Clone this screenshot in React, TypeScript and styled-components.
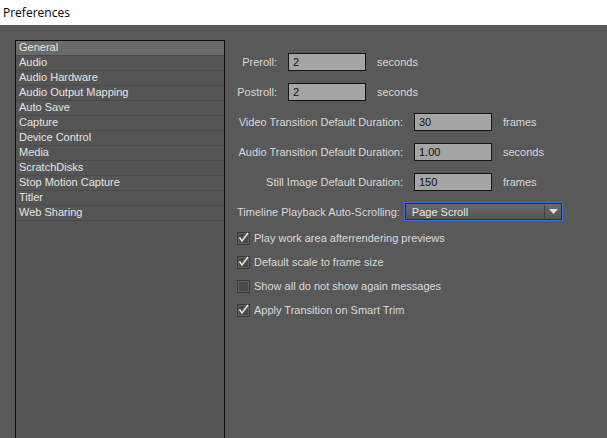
import styled, { createGlobalStyle } from 'styled-components';

const GlobalStyle = createGlobalStyle`
  html, body {
    margin: 0;
    padding: 0;
    background: #595959;
    overflow: hidden;
  }
  * {
    box-sizing: border-box;
  }
`;

const categories = [
  'General',
  'Audio',
  'Audio Hardware',
  'Audio Output Mapping',
  'Auto Save',
  'Capture',
  'Device Control',
  'Media',
  'ScratchDisks',
  'Stop Motion Capture',
  'Titler',
  'Web Sharing',
];

const timeFields = [
  { label: 'Preroll:', value: '2', unit: 'seconds' },
  { label: 'Postroll:', value: '2', unit: 'seconds' },
];

const durationFields = [
  { label: 'Video Transition Default Duration:', value: '30', unit: 'frames' },
  { label: 'Audio Transition Default Duration:', value: '1.00', unit: 'seconds' },
  { label: 'Still Image Default Duration:', value: '150', unit: 'frames' },
];

const checks = [
  { label: 'Play work area afterrendering previews', checked: true },
  { label: 'Default scale to frame size', checked: true },
  { label: 'Show all do not show again messages', checked: false },
  { label: 'Apply Transition on Smart Trim', checked: true },
];

const App = () => {
  return (
    <Window>
      <GlobalStyle />
      <TitleBar>Preferences</TitleBar>
      <Body>
        <CategoryList>
          {categories.map((name, i) => (
            <CategoryItem key={name} $active={i === 0}>
              {name}
            </CategoryItem>
          ))}
        </CategoryList>
        <Panel>
          <FieldGroup>
            {timeFields.map((f) => (
              <FieldRow key={f.label}>
                <FieldLabel $width={40}>{f.label}</FieldLabel>
                <TextBox>{f.value}</TextBox>
                <Unit>{f.unit}</Unit>
              </FieldRow>
            ))}
            {durationFields.map((f) => (
              <FieldRow key={f.label}>
                <FieldLabel $width={166}>{f.label}</FieldLabel>
                <TextBox>{f.value}</TextBox>
                <Unit>{f.unit}</Unit>
              </FieldRow>
            ))}
          </FieldGroup>
          <SelectRow>
            <SelectLabel>Timeline Playback Auto-Scrolling:</SelectLabel>
            <Select>
              <SelectValue>Page Scroll</SelectValue>
              <SelectArrow>
                <svg width="9" height="5" viewBox="0 0 9 5">
                  <path d="M0 0 H9 L4.5 5 Z" fill="#e0e0e0" />
                </svg>
              </SelectArrow>
            </Select>
          </SelectRow>
          <CheckList>
            {checks.map((c) => (
              <CheckRow key={c.label}>
                <CheckBox>
                  {c.checked && (
                    <svg width="13" height="13" viewBox="0 0 13 13">
                      <path
                        d="M2.5 6.5 L5 10 L11 2"
                        fill="none"
                        stroke="#e6e6e6"
                        strokeWidth="1.6"
                      />
                    </svg>
                  )}
                </CheckBox>
                <CheckLabel>{c.label}</CheckLabel>
              </CheckRow>
            ))}
          </CheckList>
        </Panel>
      </Body>
    </Window>
  );
};

const Window = styled.div`
  width: 607px;
  height: 438px;
  overflow: hidden;
  display: flex;
  flex-direction: column;
  font-family: 'Liberation Sans', Arial, sans-serif;
  font-size: 11px;
  color: #dadada;
`;

const TitleBar = styled.div`
  height: 25px;
  flex-shrink: 0;
  background: #ffffff;
  color: #000;
  font-family: 'Open Sans', 'Liberation Sans', sans-serif;
  font-size: 12px;
  padding: 4px 0 0 3px;
`;

const Body = styled.div`
  flex: 1;
  display: flex;
  padding: 15px 0 0 15px;
  background: #595959;
  min-height: 0;
`;

const CategoryList = styled.div`
  width: 210px;
  flex-shrink: 0;
  border: 1px solid #0f0f0f;
  border-bottom: none;
  background: #555555;
`;

const CategoryItem = styled.div<{ $active?: boolean }>`
  height: 15px;
  line-height: 12px;
  padding-left: 3px;
  border-bottom: 1px solid #4b4b4b;
  background: ${({ $active }) => ($active ? '#6b6b6b' : 'transparent')};
  color: #e4e4e4;
`;

const Panel = styled.div`
  display: flex;
  flex-direction: column;
  padding: 13px 0 0 12px;
`;

const FieldGroup = styled.div`
  display: flex;
  flex-direction: column;
  gap: 12px;
`;

const FieldRow = styled.div`
  display: flex;
  align-items: center;
  height: 18px;
  gap: 11px;
`;

const FieldLabel = styled.span<{ $width: number }>`
  width: ${({ $width }) => $width}px;
  text-align: right;
  white-space: nowrap;
`;

const TextBox = styled.div`
  width: 78px;
  height: 18px;
  background: #a5a5a5;
  border: 1px solid #161616;
  color: #111;
  padding-left: 4px;
  line-height: 16px;
`;

const Unit = styled.span`
  white-space: nowrap;
`;

const SelectRow = styled.div`
  display: flex;
  align-items: center;
  gap: 4px;
  margin-top: 11px;
`;

const SelectLabel = styled.span`
  white-space: nowrap;
`;

const Select = styled.div`
  width: 159px;
  height: 19px;
  display: flex;
  align-items: center;
  border: 1px solid #3b6fd6;
  background: linear-gradient(#6a6a6a, #555555);
  box-shadow: inset 0 0 0 1px #2a2a2a;
`;

const SelectValue = styled.span`
  flex: 1;
  padding-left: 7px;
  color: #e6e6e6;
`;

const SelectArrow = styled.span`
  width: 18px;
  height: 13px;
  display: flex;
  align-items: center;
  justify-content: center;
  border-left: 1px solid #3e3e3e;
`;

const CheckList = styled.div`
  display: flex;
  flex-direction: column;
  gap: 10px;
  margin-top: 10px;
`;

const CheckRow = styled.div`
  display: flex;
  align-items: center;
  height: 14px;
  gap: 4px;
`;

const CheckBox = styled.span`
  width: 13px;
  height: 13px;
  background: #4a4a4a;
  border: 1px solid #3a3a3a;
  box-shadow: inset 0 0 0 1px #5e5e5e;
  display: flex;
  align-items: center;
  justify-content: center;
  position: relative;

  svg {
    position: absolute;
    left: -1px;
    top: -2px;
  }
`;

const CheckLabel = styled.span`
  white-space: nowrap;
`;

export default App;
